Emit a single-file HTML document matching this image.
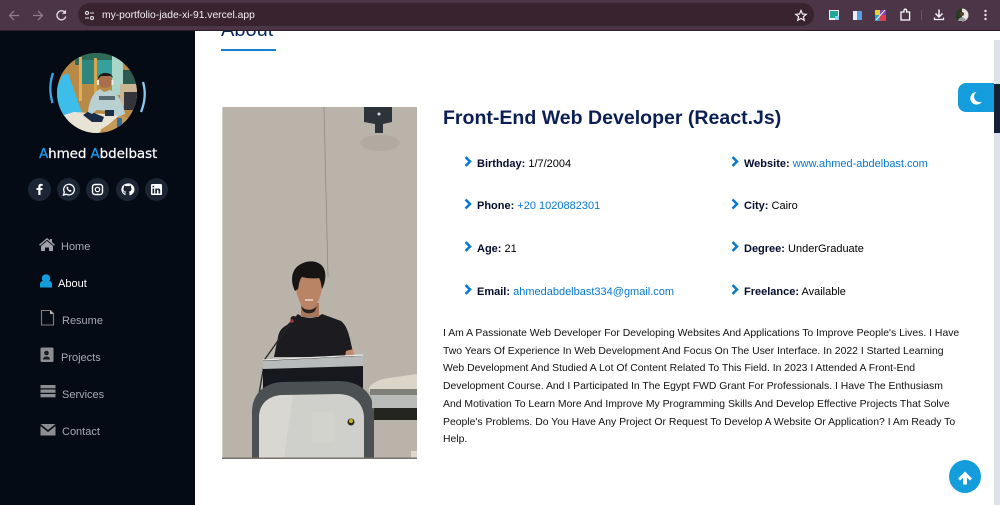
<!DOCTYPE html>
<html lang="en"><head><meta charset="utf-8"><title>Ahmed Abdelbast</title>
<style>
*{box-sizing:border-box}
html,body{margin:0;padding:0;width:1000px;height:505px;overflow:hidden;background:#fff;font-family:"Liberation Sans",Arial,sans-serif}
.a{position:absolute;white-space:nowrap}
#chrome{position:absolute;left:0;top:0;width:1000px;height:31px;background:#4b3547;border-bottom:1px solid #2b1d28}
#pill{position:absolute;left:78px;top:3px;width:736px;height:23px;border-radius:12px;background:#38232f}
#side{position:absolute;left:0;top:31px;width:195px;height:474px;background:#040b14}
.soc{position:absolute;top:178px;width:23px;height:23px;border-radius:50%;background:#1c2534;color:#fff}
.soc svg{position:absolute;left:0;top:0}
.nav{position:absolute;font-size:11px;color:#a8a9b4;line-height:13px;white-space:nowrap}
.li{position:absolute;font-size:11px;line-height:13px;color:#000;white-space:nowrap}
.li b{color:#050d2e;font-weight:bold}
.li span{color:#0678d2}
#para{position:absolute;left:443px;top:325px;width:525px;font-size:10.42px;line-height:17.7px;color:#111}
#para div{white-space:nowrap}
</style></head><body>

<div id="chrome"></div>
<div id="pill"></div>
<svg class="a" style="left:0;top:0" width="1000" height="31">
<g fill="none" stroke="#8d7c8a" stroke-width="1.3"><path d="M19 15.500H10M14 11l-4.500 4.500 4.500 4.500"/><path d="M33 15.500h9M38 11l4.500 4.500-4.500 4.500"/></g>
<path d="M65 12.500a4.500 4.500 0 1 0 .8 4" fill="none" stroke="#e8e3e8" stroke-width="1.300"/><path d="M66 9.800v4h-4z" fill="#e8e3e8"/>
<g fill="none" stroke="#e8e3e8" stroke-width="1.100"><circle cx="87" cy="13" r="1.500"/><path d="M90 13h4M85 18h4"/><circle cx="92" cy="18" r="1.500"/></g>
<path d="M801 10.500l1.500 3.500 3.700.300-2.800 2.400.9 3.600-3.300-1.900-3.300 1.900.9-3.600-2.800-2.400 3.700-.300z" fill="none" stroke="#f2eef2" stroke-width="1.200"/>
<rect x="829" y="10" width="10" height="10" fill="#f1f1f1"/><rect x="830" y="11" width="8" height="7" fill="#22a69c"/><rect x="835" y="16" width="4" height="4" fill="#8fd3ee"/>
<rect x="853" y="11" width="5" height="9" fill="#e7eef7"/><rect x="857" y="11" width="5" height="9" fill="#5a9de3"/>
<rect x="875" y="10" width="5" height="5" fill="#e6d32c"/><rect x="880" y="10" width="6" height="5" fill="#7b3fc4"/><rect x="875" y="15" width="5" height="6" fill="#2c9fd8"/><rect x="880" y="15" width="6" height="6" fill="#e23d4c"/><path d="M876 20l9-10" stroke="#eee" stroke-width="1"/>
<path d="M901 12h3v-1.500a1.300 1.300 0 0 1 2.600 0V12h3v8h-8.600z" fill="none" stroke="#fff" stroke-width="1.300"/>
<path d="M921.500 10v10" stroke="#6a5566"/>
<path d="M939 9.500v7M935.500 13.500l3.500 3.500 3.500-3.500" fill="none" stroke="#f3f0f3" stroke-width="1.500"/><path d="M934.500 17.500v2h9v-2" fill="none" stroke="#f3f0f3" stroke-width="1.300"/>
<circle cx="962" cy="15" r="6.500" fill="#2b3a22"/><path d="M962 8.500a6.500 6.500 0 0 1 0 13z" fill="#e9e6e2"/><path d="M958 21c1-5 7-5 8 0z" fill="#9a9ba0"/><circle cx="962" cy="14" r="2" fill="#5d3f2e"/>
<g fill="#e8e3e8"><circle cx="985.500" cy="11" r="1.200"/><circle cx="985.500" cy="15" r="1.200"/><circle cx="985.500" cy="19" r="1.200"/></g>
</svg>
<div class="a" style="left:102px;top:9.500px;font-size:10.300px;line-height:12px;color:#f4eff3">my-portfolio-jade-xi-91.vercel.app</div>

<div id="side"></div>

<!-- avatar -->
<svg class="a" style="left:45px;top:50px" width="105" height="90" viewBox="45 50 105 90">
<defs><clipPath id="av"><circle cx="97" cy="93" r="40"/></clipPath></defs>
<path d="M53 73c-3.500 10-3.500 20-.5 30" fill="none" stroke="#3aa6e6" stroke-width="2.300"/>
<path d="M143 82c3 10 2 20-2 30" fill="none" stroke="#8ac9f0" stroke-width="2.300"/>
<g clip-path="url(#av)">
<rect x="57" y="53" width="80" height="80" fill="#b98a45"/>
<rect x="75" y="53" width="45" height="12" fill="#2d6b58"/>
<rect x="79" y="57" width="3" height="44" fill="#e0ae55"/>
<rect x="82" y="60" width="12" height="24" fill="#2f8580"/>
<rect x="94" y="58" width="3" height="40" fill="#d9a650"/>
<rect x="97" y="60" width="15" height="20" fill="#37a09a"/>
<rect x="112" y="55" width="11" height="40" fill="#a9d6c9"/>
<rect x="123" y="70" width="14" height="14" fill="#2a5a50"/>
<rect x="120" y="84" width="17" height="22" fill="#cbb693"/>
<rect x="124" y="92" width="13" height="18" fill="#34343c"/>
<path d="M62 76l6-3 14 40 1 7-14 3-12-10v-25z" fill="#3dbde9"/>
<path d="M74 112l46 3-26 22-20-8-10-14z" fill="#e9e3d6"/>
<path d="M83 115l6-4 15 6-2 5h-10z" fill="#1c2c46"/>
<path d="M88 112c1-10 5-20 12-23l4 3 6-2c8 3 13 12 15 24l-7 3-9-6-12-1-5 4z" fill="#b9d0d2"/>
<rect x="99" y="96" width="16" height="4" fill="#566a72"/>
<circle cx="105" cy="81" r="7" fill="#a96e4c"/>
<path d="M98 79c0-8 14-8 15-1l-2-2-10 0z" fill="#1d1a18"/>
<rect x="97" y="80" width="2" height="5" fill="#e8eef2"/><rect x="111.500" y="80" width="2" height="5" fill="#e8eef2"/>
<rect x="105" y="110" width="9" height="6" fill="#1d2f45"/>
<path d="M100 130l22-14 8 3-14 16z" fill="#c59a58"/>
<rect x="117" y="118" width="5" height="12" fill="#2e6f9e"/>
</g></svg>

<div class="a" style="left:39px;top:146px;font-family:'DejaVu Sans',sans-serif;font-size:13.500px;line-height:16px;color:#fff;letter-spacing:-.1px;-webkit-text-stroke:.2px #fff"><span style="color:#1a9cf0;-webkit-text-stroke:.2px #1a9cf0">A</span>hmed <span style="color:#1a9cf0;-webkit-text-stroke:.2px #1a9cf0">A</span>bdelbast</div>

<!-- socials -->
<div class="soc" style="left:27.500px"><svg width="23" height="23"><path d="M12.500 17v-5h1.800l.3-2h-2.100V8.800c0-.6.2-1 1-1h1.200V6c-.3 0-1-.1-1.700-.1-1.700 0-2.700 1-2.700 2.800V10H8.500v2h1.800v5z" fill="#fff"/></svg></div>
<div class="soc" style="left:56.500px"><svg width="23" height="23"><path d="M6.500 17l.8-2.900a5.300 5.300 0 1 1 2 2.100z" fill="none" stroke="#fff" stroke-width="1.300"/><path d="M9.800 8.800c-.8 1.300.2 2.800 1.300 3.800 1 1 2.300 1.600 3 .8l.5-.8-1.300-.8-.6.500c-.7-.3-1.400-1-1.700-1.700l.5-.6-.7-1.300z" fill="#fff"/></svg></div>
<div class="soc" style="left:86px"><svg width="23" height="23"><rect x="6.500" y="6.500" width="10" height="10" rx="2.500" fill="none" stroke="#fff" stroke-width="1.400"/><circle cx="11.500" cy="11.500" r="2.200" fill="none" stroke="#fff" stroke-width="1.200"/></svg></div>
<div class="soc" style="left:115.500px"><svg width="23" height="23"><path d="M11.500 5.500a6 6 0 0 0-2 11.700v-2c-1.800.4-2-.7-2.300-1.200-.2-.4-.7-.7-.3-.7.700 0 1.100.8 1.300 1 .6.700 1.100.5 1.400.3 0-.4.200-.7.400-.9-1.600-.3-2.600-1-2.600-2.800 0-.6.200-1.200.6-1.600-.1-.3-.2-1 .1-1.800 0 0 .6-.2 1.800.7a5.500 5.500 0 0 1 3.100 0c1.200-.9 1.800-.7 1.800-.7.300.8.200 1.500.1 1.800.4.400.6 1 .6 1.600 0 1.800-1 2.500-2.600 2.800.3.300.5.700.5 1.300v2.400a6 6 0 0 0-1.900-11.900z" fill="#fff"/></svg></div>
<div class="soc" style="left:145px"><svg width="23" height="23"><rect x="6" y="6" width="11" height="11" rx="1.300" fill="#fff"/><path d="M7.500 10.500h1.700V15.500H7.500zM7.500 7.800h1.700v1.500H7.500zM10.300 10.500h1.600v.7c.8-1.200 3.300-1.100 3.300 1.100v3.200h-1.700v-2.800c0-1.300-1.500-1.200-1.500 0v2.800h-1.700z" fill="#1c2534"/></svg></div>

<!-- nav icons -->
<svg class="a" style="left:38px;top:236px" width="20" height="210" viewBox="38 236 20 210">
<path d="M47 238l-8 6.800 1 1 7-6 7 6 1-1-3-2.500V239h-2v1.500z" fill="#a0a1a8"/><path d="M41 246l6-5 6 5v5h-4v-3.500h-4V251h-4z" fill="#a0a1a8"/>
<circle cx="46" cy="278.500" r="4.200" fill="#149ddd"/><path d="M40 287.500v-3.500c0-2 1.800-3 3-3h6c1.200 0 3 1 3 3v3.500z" fill="#149ddd"/>
<path d="M41.500 310.500h9l3 3v11.500h-12z" fill="none" stroke="#8d7e78" stroke-width="1.100"/><path d="M50 310.500l3.500 3.500h-3.500z" fill="#c3bdb9"/>
<rect x="40.500" y="347.500" width="13" height="14.500" rx="1.200" fill="#8e8e92"/><circle cx="46.500" cy="353" r="2.300" fill="#1a1c23"/><path d="M43 359.500c0-4 7-4 7 0z" fill="#1a1c23"/>
<g fill="#8e8e92"><rect x="40.500" y="385" width="15" height="3.300"/><rect x="40.500" y="389.500" width="15" height="3.300"/><rect x="40.500" y="394" width="15" height="3.300"/></g>
<path d="M40.500 424h15l-7.500 6z" fill="#8e8e92"/><path d="M40.500 426v9.500h15V426l-7.500 6z" fill="#8e8e92"/>
</svg>
<div class="nav" style="left:61px;top:241px">Home</div>
<div class="nav" style="left:58px;top:277.500px;color:#fff">About</div>
<div class="nav" style="left:62px;top:314.500px">Resume</div>
<div class="nav" style="left:61px;top:351.500px">Projects</div>
<div class="nav" style="left:62px;top:388.500px">Services</div>
<div class="nav" style="left:62px;top:425.500px">Contact</div>

<!-- About title -->
<div class="a" style="left:221px;top:31px;width:60px;height:18px;overflow:hidden"><div style="position:absolute;top:-13px;left:0;font-size:20px;line-height:24px;color:#0b2a5b">About</div></div>
<div class="a" style="left:221px;top:49px;width:55px;height:2px;background:#1a7fd0"></div>

<!-- photo -->
<svg class="a" style="left:221.500px;top:106.500px" width="195" height="352" viewBox="0 0 195 352">
<rect width="195" height="352" fill="#b9b3aa"/>
<path d="M102 0l4 170" stroke="#8f8a82" stroke-width=".8"/>
<ellipse cx="158" cy="36" rx="20" ry="8" fill="#aca69d" opacity=".7"/>
<path d="M142 0h28v15l-9 2v9h-8v-9l-11-2z" fill="#2c343a"/><circle cx="157" cy="7" r="1.500" fill="#ddd"/>
<!-- person -->
<path d="M76 207l-11 11c-6 3-8 7-9 12l-4 20h80l-4-18c-2-8-4-14-9-18l-19-7c-6 5-18 5-24 0z" fill="#1c1b1f"/>
<path d="M124 244l7-2 1 6-9 2z" fill="#c08a6c"/>
<rect x="79" y="196" width="18" height="14" fill="#a8765a"/>
<path d="M73 172c0-9 6-14 14-14s14 5 14 14c0 14-7 32-14 32-8 0-14-18-14-32z" fill="#b98366"/>
<path d="M73 184c-5-10-4-22 6-27 9-5 22-3 24 8 1 5 0 11-3 17-1-5-1-8-3-11-7 1-13 0-17-1-3 3-3 8-4 12z" fill="#171513"/>
<path d="M79 199c4 5 12 5 16 0l-2 5c-3 3-9 3-12 0z" fill="#2a211d"/>
<path d="M83 193h8" stroke="#f1e8e0" stroke-width="1.300"/>
<!-- mic -->
<path d="M70 214l-27 38-6 35" fill="none" stroke="#26262a" stroke-width="1.300"/>
<circle cx="71.500" cy="212" r="3" fill="#1c1c20"/><circle cx="70" cy="214" r="1.800" fill="#a03037"/>
<!-- podium -->
<path d="M41 253l100-4v34H41z" fill="#17181d"/>
<path d="M41 254l100-5v10l-100 3z" fill="#b8bbbb"/>
<path d="M41 253l100-5" stroke="#e8e8e6" stroke-width="1.200"/>
<path d="M30 351v-46c0-18 12-29 30-30l56-1c22 0 36 12 36 32v45z" fill="#4b5052"/>
<path d="M37 351v-40c0-14 9-22 23-23l56-1c16 0 26 10 26 24v40z" fill="#cfcfcb"/>
<path d="M60 288h11l-9 63H37v-40c0-14 9-22 23-23z" fill="#d8d7d2"/>
<rect x="90" y="305" width="22" height="30" fill="#d8d7d2" opacity=".5"/>
<circle cx="129" cy="315" r="3.500" fill="#2b2b1d"/><circle cx="129" cy="314" r="2" fill="#c4b321"/>
<!-- chair right -->
<path d="M147 281c3-6 12-9 20-10l28-4v18h-48z" fill="#dcd6c8"/>
<rect x="148" y="282" width="47" height="6" fill="#7f8078"/>
<rect x="150" y="288" width="45" height="13" fill="#b9bbb8"/>
<rect x="152" y="301" width="43" height="12" fill="#242420"/>
<rect x="189" y="344" width="6" height="7" fill="#ddd7c8"/>
<rect y="0" width="1" height="352" fill="#d2cec8"/>
<rect x="0" y="350.500" width="195" height="1.500" fill="#77736c"/>
</svg>

<!-- heading -->
<div class="a" style="left:443px;top:105.500px;font-size:19.550px;line-height:24px;font-weight:bold;color:#0b1f54">Front-End Web Developer (React.Js)</div>

<!-- info -->
<svg class="a" style="left:460px;top:149px" width="285" height="150" viewBox="460 150 285 150">
<g fill="none" stroke="#0678d2" stroke-width="2.500"><path d="M465.500 158l4.500 4.500-4.500 4.500M732.500 158l4.500 4.500-4.500 4.500"/><path d="M465.500 200.500l4.500 4.500-4.500 4.500M732.500 200.500l4.500 4.500-4.500 4.500"/><path d="M465.500 243l4.500 4.500-4.500 4.500M732.500 243l4.500 4.500-4.500 4.500"/><path d="M465.500 286l4.500 4.500-4.500 4.500M732.500 286l4.500 4.500-4.500 4.500"/></g>
</svg>
<div class="li" style="left:477px;top:157.500px"><b>Birthday:</b> 1/7/2004</div>
<div class="li" style="left:477px;top:200px"><b>Phone:</b> <span>+20 1020882301</span></div>
<div class="li" style="left:477px;top:242.500px"><b>Age:</b> 21</div>
<div class="li" style="left:477px;top:285.500px"><b>Email:</b> <span>ahmedabdelbast334@gmail.com</span></div>
<div class="li" style="left:744px;top:157.500px"><b>Website:</b> <span>www.ahmed-abdelbast.com</span></div>
<div class="li" style="left:744px;top:200px"><b>City:</b> Cairo</div>
<div class="li" style="left:744px;top:242.500px"><b>Degree:</b> UnderGraduate</div>
<div class="li" style="left:744px;top:285.500px"><b>Freelance:</b> Available</div>

<div id="para">
<div>I Am A Passionate Web Developer For Developing Websites And Applications To Improve People's Lives. I Have</div>
<div>Two Years Of Experience In Web Development And Focus On The User Interface. In 2022 I Started Learning</div>
<div>Web Development And Studied A Lot Of Content Related To This Field. In 2023 I Attended A Front-End</div>
<div>Development Course. And I Participated In The Egypt FWD Grant For Professionals. I Have The Enthusiasm</div>
<div>And Motivation To Learn More And Improve My Programming Skills And Develop Effective Projects That Solve</div>
<div>People's Problems. Do You Have Any Project Or Request To Develop A Website Or Application? I Am Ready To</div>
<div>Help.</div>
</div>

<!-- scrollbar -->
<div class="a" style="left:994px;top:40px;width:6px;height:465px;background:#dee2e8"></div>
<div class="a" style="left:994px;top:84px;width:6px;height:49px;background:#142033"></div>

<!-- theme toggle -->
<div class="a" style="left:958px;top:83px;width:36px;height:29px;background:#149ddd;border-radius:8px 0 0 8px"></div>
<svg class="a" style="left:968px;top:89px" width="16" height="17" viewBox="0 0 16 17"><path d="M8.500 3a6.300 6.300 0 1 0 5.500 9.500a5.500 5.500 0 0 1-5.500-9.500z" fill="#fff"/></svg>

<!-- back to top -->
<div class="a" style="left:949px;top:460px;width:32px;height:33px;border-radius:50%;background:#149ddd"></div>
<svg class="a" style="left:949px;top:460px" width="32" height="33"><path d="M16 11.500l7 7-2 2-3-2.700V24.500h-4v-6.700l-3 2.700-2-2z" fill="#fff"/></svg>

</body></html>
